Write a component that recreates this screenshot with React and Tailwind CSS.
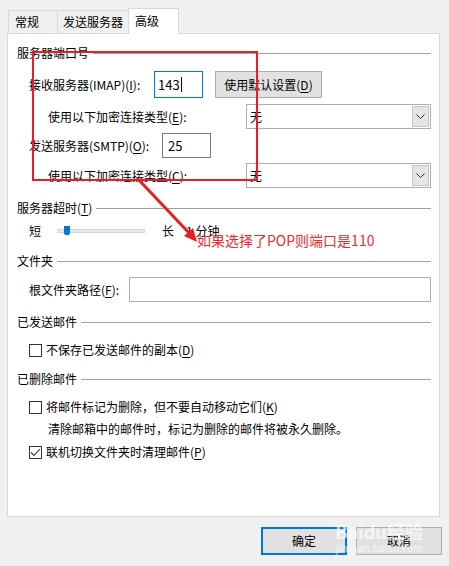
import React from "react";

const U = ({ children }) => <span className="underline underline-offset-2">{children}</span>;

function GroupHeader({ title, mnemonic, className = "" }) {
  return (
    <div className={`flex h-[16px] items-center ${className}`}>
      <span className="whitespace-nowrap">
        {title}
        {mnemonic && (
          <>
            (<U>{mnemonic}</U>)
          </>
        )}
      </span>
      <div className="ml-[4px] h-px flex-1 bg-[#a0a0a0]" />
    </div>
  );
}

function Select() {
  return (
    <div className="flex h-full w-[185px] items-center border border-[#adadad] bg-white pl-[3px]">
      <span className="flex-1">无</span>
      <div className="mr-px flex h-[21px] w-[17px] items-center justify-center border border-[#c6c6c6] bg-[#e5e5e5]">
        <svg width="9" height="5" viewBox="0 0 9 5" fill="none">
          <polyline points="0.5,0.5 4.5,4.5 8.5,0.5" stroke="#333" strokeWidth="1" />
        </svg>
      </div>
    </div>
  );
}

function Checkbox({ checked }) {
  return (
    <div className="flex h-[13px] w-[13px] items-center justify-center border border-[#333] bg-white">
      {checked && (
        <svg width="11" height="9" viewBox="0 0 11 9" fill="none">
          <polyline points="1,4.5 4,7.5 10,1" stroke="#333" strokeWidth="1.1" />
        </svg>
      )}
    </div>
  );
}

export default function App() {
  return (
    <div className="relative h-[566px] w-[449px] overflow-hidden bg-[#f0f0f0] font-['Noto_Sans_CJK_SC',sans-serif] text-[12px] leading-[16px] text-black">
      {/* tabs */}
      <div className="flex h-[33px] items-end pl-[8px]">
        <div className="flex h-[23px] w-[49px] items-center border-l border-t border-[#d9d9d9] pl-[6px]">常规</div>
        <div className="flex h-[23px] w-[71px] items-center border-l border-t border-[#d9d9d9] pl-[5px]">发送服务器</div>
        <div className="relative z-10 -mb-px flex h-[26px] w-[51px] items-center border-x border-t border-[#d9d9d9] bg-white pb-[2px] pl-[6px]">
          高级
        </div>
      </div>

      {/* panel */}
      <div className="ml-[7px] flex h-[484px] w-[433px] flex-col border border-[#d9d9d9] bg-white pl-[9px] pr-[8px] pt-[11px]">
        <GroupHeader title="服务器端口号" />

        <div className="mt-[10px] flex h-[27px] items-center">
          <span className="ml-[12px] w-[125px] whitespace-nowrap">
            接收服务器(IMAP)(<U>I</U>):
          </span>
          <div className="flex h-[27px] w-[49px] items-center border border-[#0078d7] pl-[3px] text-[13px]">
            143
            <span className="ml-px h-[15px] w-px bg-black" />
          </div>
          <button className="ml-[12px] h-[27px] w-[107px] border border-[#adadad] bg-[#e1e1e1] text-[12px]">
            使用默认设置(<U>D</U>)
          </button>
        </div>

        <div className="mt-[6px] flex h-[25px] items-center">
          <span className="ml-[31px] flex-1 whitespace-nowrap">
            使用以下加密连接类型(<U>E</U>):
          </span>
          <Select />
        </div>

        <div className="mt-[4px] flex h-[25px] items-center">
          <span className="ml-[12px] w-[133px] whitespace-nowrap">
            发送服务器(SMTP)(<U>O</U>):
          </span>
          <div className="flex h-[25px] w-[49px] items-center border border-[#7a7a7a] pl-[5px] text-[13px]">25</div>
        </div>

        <div className="mt-[5px] flex h-[25px] items-center">
          <span className="ml-[31px] flex-1 whitespace-nowrap">
            使用以下加密连接类型(<U>C</U>):
          </span>
          <Select />
        </div>

        <GroupHeader title="服务器超时" mnemonic="T" className="mt-[12px]" />

        <div className="mt-[7px] flex h-[16px] items-center">
          <span className="ml-[12px]">短</span>
          <div className="relative ml-[16px] h-[4px] w-[88px] border border-[#d6d6d6] bg-[#e7e7e7]">
            <div className="absolute left-[6px] top-[-4px] h-[9px] w-[6px] rounded-b-[2px] bg-[#0078d7]" />
          </div>
          <span className="ml-[17px]">长</span>
          <span className="ml-[12px]">1 分钟</span>
        </div>

        <GroupHeader title="文件夹" className="mt-[14px]" />

        <div className="mt-[8px] flex h-[25px] items-center">
          <span className="ml-[12px] w-[100px] whitespace-nowrap">
            根文件夹路径(<U>F</U>):
          </span>
          <div className="h-[25px] flex-1 border border-[#adadad]" />
        </div>

        <GroupHeader title="已发送邮件" className="mt-[12px]" />

        <div className="mt-[12px] flex h-[16px] items-center">
          <div className="ml-[12px]">
            <Checkbox />
          </div>
          <span className="ml-[4px]">
            不保存已发送邮件的副本(<U>D</U>)
          </span>
        </div>

        <GroupHeader title="已删除邮件" className="mt-[13px]" />

        <div className="mt-[12px] flex h-[16px] items-center">
          <div className="ml-[12px]">
            <Checkbox />
          </div>
          <span className="ml-[4px]">
            将邮件标记为删除，但不要自动移动它们(<U>K</U>)
          </span>
        </div>

        <div className="mt-[6px] h-[16px] pl-[31px]">清除邮箱中的邮件时，标记为删除的邮件将被永久删除。</div>

        <div className="mt-[7px] flex h-[16px] items-center">
          <div className="ml-[12px]">
            <Checkbox checked />
          </div>
          <span className="ml-[4px]">
            联机切换文件夹时清理邮件(<U>P</U>)
          </span>
        </div>
      </div>

      {/* footer buttons */}
      <div className="mt-[10px] flex gap-[9px] pl-[261px]">
        <button className="h-[28px] w-[86px] border-2 border-[#0078d7] bg-[#e1e1e1] text-[12px]">确定</button>
        <button className="h-[28px] w-[86px] border border-[#adadad] bg-[#e1e1e1] text-[12px]">取消</button>
      </div>

      {/* annotation overlay */}
      <div className="pointer-events-none absolute left-[32px] top-[51px] h-[130px] w-[226px] border-2 border-[#ec1c24]" />
      <svg className="pointer-events-none absolute left-0 top-0" width="449" height="566">
        <line x1="137" y1="178" x2="190" y2="234" stroke="#ec1c24" strokeWidth="3" />
        <polygon points="197,242 184,236 193,228" fill="#ec1c24" />
      </svg>
      <div className="pointer-events-none absolute left-[197px] top-[231px] whitespace-nowrap text-[14px] leading-[18px] text-[#ee2a2f]">
        如果选择了POP则端口是110
      </div>

      {/* watermark */}
      <div className="pointer-events-none absolute left-[334px] top-[520px] flex w-[90px] flex-col items-center whitespace-nowrap text-white/70">
        <div className="text-[18px] font-bold leading-[22px]">Baidu经验</div>
        <div className="text-[10px] leading-[12px]">jingyan.baidu.com</div>
      </div>
    </div>
  );
}
